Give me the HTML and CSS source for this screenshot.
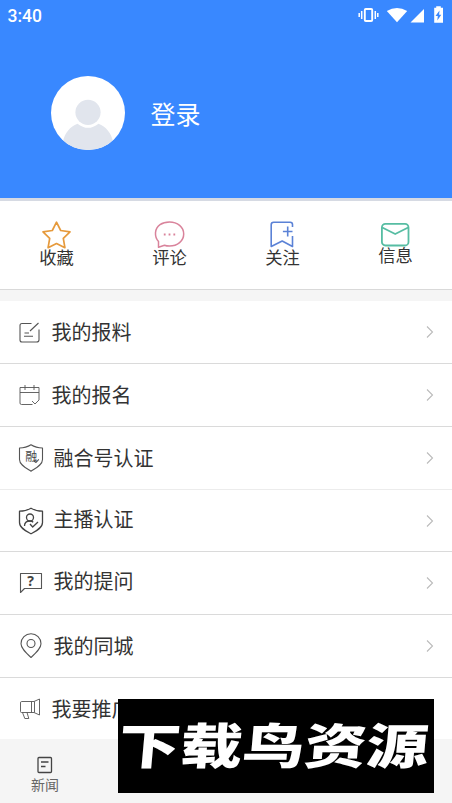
FILE: index.html
```html
<!DOCTYPE html>
<html lang="zh-CN">
<head>
<meta charset="utf-8">
<title>我的</title>
<link rel="stylesheet" href="styles.css">
</head>
<body>
<div class="app">
  <header class="header">
    <div class="status">
      <span class="time">3:40</span>
      <svg class="status-icons" width="88" height="20" viewBox="0 0 88 20" fill="#fff">
        <path d="M1.200 8v4M3.700 6v8M17.300 6v8M19.800 8v4" stroke="#fff" stroke-width="1.500"/>
        <rect x="6.800" y="4" width="7.400" height="12" rx="1" fill="none" stroke="#fff" stroke-width="1.900"/>
        <path d="M28.800 6Q39 -.2 49.200 6L39 17.300z"/>
        <path d="M66 4v13.500H52.500z"/>
        <path fill-rule="evenodd" d="M78.200 1.200h4.600v1.600H85v15H76.200v-15h2zM81.500 5.500l-4 5.600h2.300l-.5 4.500 4-5.800h-2.200z"/>
      </svg>
    </div>
    <div class="profile">
      <svg class="avatar" width="74" height="74" viewBox="0 0 74 74">
        <defs><clipPath id="disc"><circle cx="37" cy="37" r="37"/></clipPath></defs>
        <circle cx="37" cy="37" r="37" fill="#fff"/>
        <g clip-path="url(#disc)" fill="#e1e5ed">
          <path d="M12 65C14 57 19 50.500 26.500 47.700Q37 56 47.500 47.700C55 50.500 60 57 62 65V76H12z"/>
          <circle cx="37" cy="36.300" r="12.600"/>
        </g>
      </svg>
      <span class="login">登录</span>
    </div>
  </header>

  <nav class="quick">
    <a class="quick-item">
      <svg width="32" height="30" viewBox="1 0 32 30" fill="none" stroke="#e69a3c" stroke-width="1.700" stroke-linejoin="round"><path d="M16.500 2.200l4.200 8.300 9.300 1.400-6.700 6.500 1.600 9.300-8.400-4.200-8.400 4.200 1.600-9.300-6.700-6.500 9.300-1.400z"/></svg>
      <span>收藏</span>
    </a>
    <a class="quick-item">
      <svg width="32" height="30" viewBox=".5 0 32 30" fill="none" stroke="#d9839b" stroke-width="1.500" stroke-linejoin="round"><path d="M5 27.300V21.500C.5 16.500 1 8.500 6.500 4.700 10 2.200 13 2 16 2c8 0 14.200 5 14.200 12S24 26 16 26c-2 0-3.500-.2-5-.8z"/><path d="M10.300 14.500h1.800M15.100 14.500h1.800M19.900 14.500h1.800" stroke-width="1.800"/></svg>
      <span>评论</span>
    </a>
    <a class="quick-item">
      <svg width="32" height="30" viewBox=".8 0 32 30" fill="none" stroke="#5b82d6" stroke-width="1.600" stroke-linejoin="round"><path d="M26.300 7V4.500Q26.300 2.200 24 2.200H7.500Q5 2.200 5 4.700V26.500L16 21l10.300 5.500V16M21.500 6.500v10M16.700 11.500h9.600"/></svg>
      <span>关注</span>
    </a>
    <a class="quick-item message">
      <svg width="32" height="30" viewBox=".8 2 32 30" fill="none" stroke="#57bda3" stroke-width="1.800" stroke-linejoin="round"><rect x="2.700" y="5.900" width="26.600" height="21.600" rx="3.500"/><path d="M3 9.500l13 6.500 13-6.500"/></svg>
      <span>信息</span>
    </a>
  </nav>

  <main class="list">
    <a class="row">
      <svg class="icon" width="28" height="28" viewBox="-.5 -1.500 28 28"><path d="M15 4H5.500Q3.500 4 3.500 6V20.500Q3.500 22.500 5.500 22.500H20Q22.500 22.500 22.500 20.500V10M13.500 11.500L22 3.500M8 13.500h4.500M7.500 16.700h9"/></svg>
      <span class="label">我的报料</span>
      <svg class="chevron" width="8" height="14" viewBox="0 0 8 14"><path d="M1 1.500l5.500 5.500-5.500 5.500"/></svg>
    </a>
    <a class="row">
      <svg class="icon thin" width="28" height="28" viewBox="-.5 -1 28 28"><path d="M16 22.500H5Q3.500 22.500 3.500 21V5.500H22.500V18L18.500 22 15.500 19M3.500 10.500h19M8.500 3v5M17.500 3v5"/></svg>
      <span class="label">我的报名</span>
      <svg class="chevron" width="8" height="14" viewBox="0 0 8 14"><path d="M1 1.500l5.500 5.500-5.500 5.500"/></svg>
    </a>
    <a class="row shift1 pale">
      <svg class="icon" width="28" height="28" viewBox="0 0 28 28"><path d="M15 .8Q20 4 26.500 4V15.500C26.500 21 20 24 15 27.200 10 24 3.500 21 3.500 15.500V4Q10 4 15 .8zM18 17l2 1.500 2.800-3.200"/><text class="seal" x="9.300" y="17">融</text></svg>
      <span class="label">融合号认证</span>
      <svg class="chevron" width="8" height="14" viewBox="0 0 8 14"><path d="M1 1.500l5.500 5.500-5.500 5.500"/></svg>
    </a>
    <a class="row short shift2 up1">
      <svg class="icon strong" width="28" height="28" viewBox="0 0 28 28"><path d="M15 1.200Q20 4.200 26.500 4.200V15.500C26.500 21 20 24 15 26.800 10 24 3.500 21 3.500 15.500V4.200Q10 4.200 15 1.200z"/><circle cx="14" cy="10.500" r="3.500"/><path d="M8.500 19q0-5 5.500-5 2 0 3.200 1.200M14 17l2.700 3 5.300-5"/></svg>
      <span class="label">主播认证</span>
      <svg class="chevron" width="8" height="14" viewBox="0 0 8 14"><path d="M1 1.500l5.500 5.500-5.500 5.500"/></svg>
    </a>
    <a class="row shift2 up2">
      <svg class="icon" width="28" height="28" viewBox="0 0 28 28"><path d="M4.500 4.500H25.500V19.500H8.500L4.500 23.500z"/><text class="question" x="11.200" y="17">?</text></svg>
      <span class="label">我的提问</span>
      <svg class="chevron" width="8" height="14" viewBox="0 0 8 14"><path d="M1 1.500l5.500 5.500-5.500 5.500"/></svg>
    </a>
    <a class="row shift2">
      <svg class="icon" width="28" height="28" viewBox="0 0 28 28"><path d="M15 25.500C10 21 5 16.500 5 11.800A10 10 0 0 1 25 11.800C25 16.500 20 21 15 25.500z"/><circle cx="15" cy="11.500" r="4"/></svg>
      <span class="label">我的同城</span>
      <svg class="chevron" width="8" height="14" viewBox="0 0 8 14"><path d="M1 1.500l5.500 5.500-5.500 5.500"/></svg>
    </a>
    <a class="row last">
      <svg class="icon thin" width="28" height="28" viewBox="0 0 28 28"><path d="M18 6.500H5.500Q4.500 6.500 4.500 8V16.500Q4.500 17.500 5.500 17.500H18L23.500 20V4L18 6.500zM15.500 6.500v11M18.500 6.500v11M6.500 17.500l2.300 6h4l-1.800-6"/></svg>
      <span class="label">我要推广</span>
      <svg class="chevron" width="8" height="14" viewBox="0 0 8 14"><path d="M1 1.500l5.500 5.500-5.500 5.500"/></svg>
    </a>
  </main>

  <footer class="tabs">
    <a class="tab">
      <svg width="16" height="18" viewBox="0 0 16 18" fill="none" stroke="#444" stroke-width="1.300"><rect x="1" y="1.500" width="13.500" height="15" rx="1"/><path d="M4 6h7.500M4 10.500h4.500"/></svg>
      <span>新闻</span>
    </a>
  </footer>
  <div class="watermark"><span>下载鸟资源</span></div>
</div>
</body>
</html>
```

FILE: styles.css
```css
* { box-sizing: border-box; }
body {
  margin: 0;
  background: #f5f5f5;
  color: #333;
  font-family: "Noto Sans CJK SC", sans-serif;
}
.app { position: relative; width: 452px; height: 803px; overflow: hidden; }

.header {
  height: 201px;
  background: #3988ff;
  border-bottom: 3px solid #d6dae3;
  color: #fff;
}
.status {
  height: 32px;
  padding: 0 6px 0 7.500px;
  display: flex;
  justify-content: space-between;
}
.time { font: 500 17.500px/32px Roboto, sans-serif; }
.status-icons { margin: 5px 0 0; }
.profile {
  display: flex;
  align-items: center;
  gap: 25.500px;
  padding: 44px 0 0 51px;
}
.avatar { display: block; }
.login { font-size: 25px; line-height: 36px; }

.quick {
  display: grid;
  grid-template-columns: repeat(4, 113px);
  height: 89px;
  padding-top: 19px;
  background: #fff;
  border-bottom: 1px solid #d9d9d9;
}
.quick-item {
  display: flex;
  flex-direction: column;
  align-items: center;
  font-size: 17.3px;
  line-height: 24px;
}
.quick-item svg { flex: none; margin-bottom: -5px; }
.quick-item.message svg { margin-bottom: -7px; }

.list { margin-top: 11px; background: #fff; }
.row {
  display: flex;
  align-items: center;
  height: 63px;
  padding: 0 18px 0 16px;
  border-bottom: 1px solid #dadada;
}
.row.pale { border-color: #ececec; }
.row.short { height: 62px; }
.row.last { height: 61px; border: 0; }
.icon {
  flex: none;
  fill: none;
  stroke: #555;
  stroke-width: 1.1;
  stroke-linejoin: round;
}
.icon.thin { stroke-width: .9; }
.icon.strong { stroke: #444; stroke-width: 1.3; }
.seal { font-size: 12px; fill: #444; stroke: none; }
.question { font: bold 14px "Noto Sans", sans-serif; fill: #444; stroke: none; }
.label {
  flex: 1;
  margin-left: 7.500px;
  font-size: 20px;
  line-height: 30px;
}
.shift1 .label { margin-left: 9.500px; }
.shift2 .label { margin-left: 9.500px; }
.up1 .label { padding-bottom: 3px; }
.up2 .label { padding-bottom: 5px; }
.chevron { fill: none; stroke: #bbb; stroke-width: 1.1; }

.tabs {
  display: flex;
  height: 64px;
  background: #f5f5f5;
}
.tab {
  width: 90px;
  padding-top: 17px;
  display: flex;
  flex-direction: column;
  align-items: center;
  color: #666;
  font-size: 14px;
  line-height: 20px;
}
.watermark {
  position: absolute;
  left: 118px;
  top: 699px;
  width: 316px;
  height: 94px;
  background: #000;
  color: #fff;
  display: flex;
  align-items: center;
  justify-content: center;
  white-space: nowrap;
}
.watermark span {
  font-size: 50px;
  line-height: 94px;
  font-weight: 900;
  transform: translate(-2px, -3px) scale(1.24, .97) skewX(-4deg);
}
```
